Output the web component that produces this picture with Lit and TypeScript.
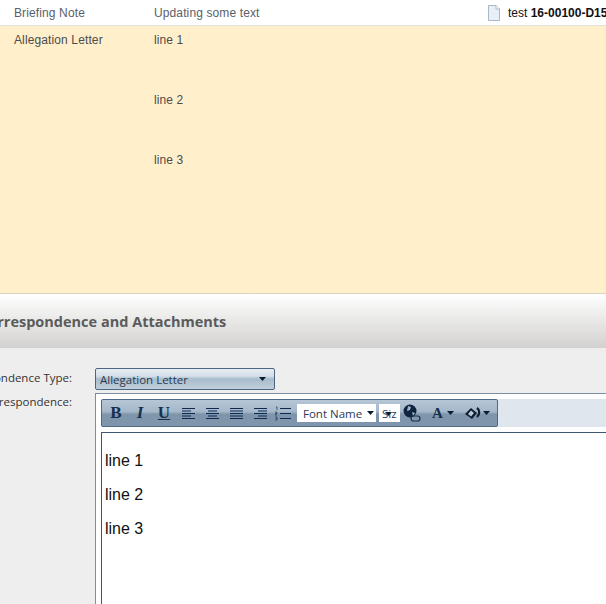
import { LitElement, html, css, svg } from "lit";
import { customElement } from "lit/decorators.js";

const lines = (rows: [number, number][]) => svg`${rows.map(
  ([a, b], i) => svg`<rect x=${a} y=${1 + i * 2.5} width=${b - a} height="1" fill="#0f2a50"/>`
)}`;

const caret = html`<svg class="caret" width="7" height="4" viewBox="0 0 7 4"><path d="M0 0h7L3.500 4z" fill="#0c1c30"/></svg>`;

@customElement("app-root")
export class AppRoot extends LitElement {
  static styles = css`
    :host { display: block; width: 606px; height: 604px; overflow: hidden; background: #eee; font-family: "Liberation Sans", Arial, sans-serif; }
    .top { height: 25px; background: #fff; border-bottom: 1px solid #e2e0dc; display: grid; grid-template-columns: 154px 334px 1fr; align-items: center; font-size: 12px; letter-spacing: .12px; color: #5a6068; white-space: nowrap; overflow: hidden; }
    .top > span:first-child, .cell-a { padding-left: 14px; }
    .file { display: flex; align-items: center; gap: 8px; color: #111; min-width: 0; margin-top: 1px; letter-spacing: 0; }
    .file svg { flex: none; }
    .file b { font-weight: bold; }
    .note { height: 267px; background: #ffefcb; border-bottom: 1px solid #d9d3c4; display: grid; grid-template-columns: 154px 1fr; font-size: 12px; letter-spacing: .12px; color: #4c4c4c; }
    .note-lines { display: flex; flex-direction: column; gap: 40px; padding-top: 4px; }
    .note-lines div, .cell-a { line-height: 20px; }
    .cell-a { padding-top: 4px; }
    .head { height: 54px; background: linear-gradient(#fff, #d2d1cf); display: flex; align-items: center; overflow: hidden; }
    .head h2 { margin: 0 0 0 -21px; font: 700 14.5px "Open Sans", sans-serif; color: #5b5b5b; white-space: nowrap; }
    .form { display: grid; grid-template-columns: 72px 1fr; column-gap: 23px; padding-top: 20px; font: 11.5px "Open Sans", sans-serif; color: #333; }
    .label { display: flex; justify-content: flex-end; white-space: nowrap; height: 18px; align-items: center; }
    .label.second { height: 19px; align-items: flex-end; }
    .select { width: 180px; height: 22px; box-sizing: border-box; border: 1px solid #4d6580; border-radius: 2px; background: linear-gradient(#e6ecf1 0, #d5dfe8 35%, #a9bccd 50%, #c0cedb 100%); display: flex; align-items: center; justify-content: space-between; padding: 0 4px; font-size: 11.5px; color: #2b3a4c; }
    .select .caret { margin-right: 4px; }
    .outer { margin-top: 3px; border: 1px solid #7d8ea3; border-right: none; border-bottom: none; background: #fff; padding: 5px 0 0 5px; height: 230px; box-sizing: border-box; }
    .band { height: 28px; background: #dfe6ed; }
    .bar { width: 397px; height: 28px; box-sizing: border-box; border: 1px solid #4f6a85; border-radius: 2px; background: linear-gradient(#b6c6d6 0, #a5b7c9 45%, #7e95ab 55%, #7f95ab 100%); display: flex; align-items: center; padding-left: 2px; color: #0f2a50; }
    .btn { width: 24px; text-align: center; font: 700 17px "Liberation Serif", serif; color: #16304f; flex: none; }
    .btn.i { font-style: italic; }
    .btn.u { text-decoration: underline; }
    .al { width: 24px; display: flex; justify-content: center; flex: none; }
    .combo { background: #fff; height: 18px; display: flex; align-items: center; font: 11.5px "Open Sans", sans-serif; color: #2b3a5c; box-sizing: border-box; flex: none; white-space: nowrap; }
    .combo.name { width: 79px; margin-left: 6px; padding-left: 6px; gap: 5px; }
    .combo.size { position: relative; width: 21px; margin-left: 3px; padding-left: 3px; overflow: hidden; }
    .combo.size .caret { position: absolute; left: 6px; top: 8px; }
    .ic { flex: none; display: flex; align-items: center; gap: 3px; }
    .list { margin-left: 3px; }
    .globe { margin-left: 3px; }
    .fore { margin-left: 11px; font: 700 15px "Liberation Serif", serif; color: #16304f; gap: 4px; }
    .back { margin-left: 10px; gap: 1px; }
    .area { margin-top: 5px; border: solid #3e566f; border-width: 1px 0 0 1px; background: #fff; height: 200px; box-sizing: border-box; padding: 19px 0 0 3px; font: 16px/18px "Liberation Sans", Arial, sans-serif; color: #111; }
    .area p { margin: 0 0 16px; }
  `;

  render() {
    return html`
      <div class="top">
        <span>Briefing Note</span>
        <span>Updating some text</span>
        <span class="file">
          <svg width="12" height="16" viewBox="0 0 12 16"><path d="M.5.500h7.500l3.500 3.500v11.500h-11z" fill="#e8eff6" stroke="#a9b8c6"/><path d="M8 .500v3.500h3.500" fill="#fff" stroke="#a9b8c6"/></svg>
          <span>test <b>16-00100-D15</b></span>
        </span>
      </div>
      <div class="note">
        <div class="cell-a">Allegation Letter</div>
        <div class="note-lines"><div>line 1</div><div>line 2</div><div>line 3</div></div>
      </div>
      <div class="head"><h2>Correspondence and Attachments</h2></div>
      <div class="form">
        <div class="label">Correspondence Type:</div>
        <div class="select"><span>Allegation Letter</span>${caret}</div>
        <div class="label second">Correspondence:</div>
        <div class="outer">
          <div class="band">
            <div class="bar">
              <span class="btn">B</span><span class="btn i">I</span><span class="btn u">U</span>
              <span class="al"><svg width="13" height="13" viewBox="0 0 13 13">${lines([[0,13],[0,9],[0,13],[0,9],[0,13]])}</svg></span>
              <span class="al"><svg width="13" height="13" viewBox="0 0 13 13">${lines([[0,13],[2,11],[0,13],[2,11],[0,13]])}</svg></span>
              <span class="al"><svg width="13" height="13" viewBox="0 0 13 13">${lines([[0,13],[0,13],[0,13],[0,13],[0,13]])}</svg></span>
              <span class="al"><svg width="13" height="13" viewBox="0 0 13 13">${lines([[0,13],[4,13],[0,13],[4,13],[0,13]])}</svg></span>
              <span class="ic list"><svg width="16" height="15" viewBox="0 0 16 15"><rect x="5" y="2" width="11" height="1" fill="#0f2a50"/><rect x="5" y="7" width="11" height="1" fill="#0f2a50"/><rect x="5" y="12" width="11" height="1" fill="#0f2a50"/><path d="M1 1h1v3M0 6h2v1.500H0V9h2M0 11h2v3H0M1 12.500h1" fill="none" stroke="#2a4463" stroke-width=".8"/></svg></span>
              <span class="combo name"><span>Font Name</span>${caret}</span>
              <span class="combo size">Siz${caret}</span>
              <span class="ic globe"><svg width="18" height="18" viewBox="0 0 18 18"><circle cx="7" cy="7" r="6.500" fill="#0f2440"/><path d="M5 2l3 1-1 3-3 1zM9 8l3 1-2 3z" fill="#9fb4c8"/><rect x="8" y="12" width="9" height="5" rx="2.500" fill="none" stroke="#16304f" stroke-width="1.200"/></svg></span>
              <span class="ic fore">A${caret}</span>
              <span class="ic back"><svg width="18" height="13" viewBox="0 0 18 13"><path d="M7 1l6 5-5 6-7-5z" fill="#0c1c30"/><path d="M7 3.500l3 2.500-3 3.500-3-2.500z" fill="#b8c7d6"/><path d="M13 1c3 2 3 6 0 9" fill="none" stroke="#0c1c30" stroke-width="2.200"/></svg>${caret}</span>
            </div>
          </div>
          <div class="area"><p>line 1</p><p>line 2</p><p>line 3</p></div>
        </div>
      </div>
    `;
  }
}
